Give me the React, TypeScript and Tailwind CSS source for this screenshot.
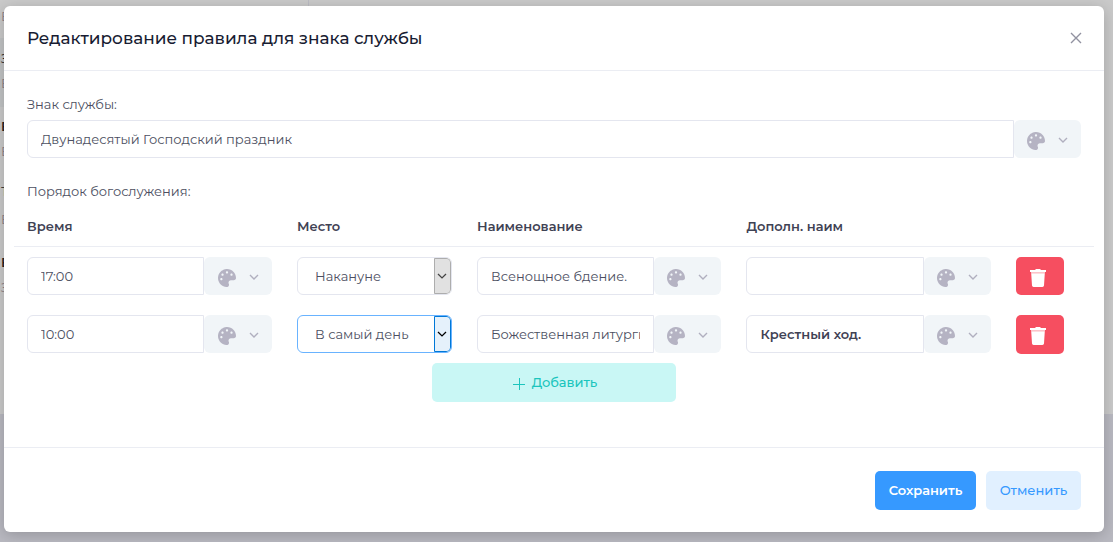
import type { ReactNode } from "react";

function Txt({ className, children }: { className: string; children: ReactNode }) {
  return <span className={`block whitespace-nowrap ${className}`}>{children}</span>;
}

function Palette() {
  return (
    <svg viewBox="0 0 512 512" className="mt-[3px] size-[18px] shrink-0 fill-[#b5b3c3]">
      <path d="M204.3 5C104.900 24.400 24.800 104.300 5.200 203.400c-37 187 131.700 326.400 258.800 306.700 41.200-6.400 61.400-54.600 42.500-91.700-23.100-45.400 9.900-98.400 60.900-98.400h79.700c35.800 0 64.800-29.600 64.900-65.300C511.500 97.100 368.100-26.900 204.300 5zM96 320c-17.700 0-32-14.300-32-32s14.300-32 32-32 32 14.300 32 32-14.300 32-32 32zm32-128c-17.700 0-32-14.300-32-32s14.300-32 32-32 32 14.300 32 32-14.300 32-32 32zm128-64c-17.700 0-32-14.300-32-32s14.300-32 32-32 32 14.300 32 32-14.300 32-32 32zm128 64c-17.700 0-32-14.300-32-32s14.300-32 32-32 32 14.300 32 32-14.300 32-32 32z" />
    </svg>
  );
}

function Chevron({ className }: { className: string }) {
  return (
    <svg viewBox="0 0 10 6" className={`h-[6px] w-[10px] shrink-0 fill-none ${className}`}>
      <path d="M1 1 5 4.900 9 1" />
    </svg>
  );
}

function StyledInput({ children, className = "", wide = false }: { children?: ReactNode; className?: string; wide?: boolean }) {
  return (
    <div className={`flex h-[38px] ${className}`}>
      <div className="flex min-w-0 flex-1 items-center rounded-l-md border border-[#e4e6ef] px-[13px]">
        <div className="-mt-px min-w-0 flex-1 overflow-hidden">{children}</div>
      </div>
      <button className={`flex items-center rounded-md bg-[#f1f5f8] ${wide ? "w-[68px] pl-[14px]" : "w-[67px] pl-[13px]"}`}>
        <Palette />
        <Chevron className="mt-px ml-[13px] stroke-[#b0afbf] stroke-[1.4]" />
      </button>
    </div>
  );
}

function Select({ children, active = false }: { children: ReactNode; active?: boolean }) {
  return (
    <div className={`flex h-[38px] w-[155px] items-center overflow-hidden rounded-md border pl-[17px] ${active ? "border-[#69b3ff]" : "border-[#e4e6ef]"}`}>
      <div className="-mt-px flex-1">{children}</div>
      <div className={`flex h-9 w-[17px] items-center rounded-r-[4px] border pl-[2px] ${active ? "border-[#0078d7] bg-[#e5f1fb]" : "border-[#adadad] bg-[#e1e1e1]"}`}>
        <Chevron className={active ? "stroke-black stroke-[1.3]" : "stroke-[#444] stroke-[1.3]"} />
      </div>
    </div>
  );
}

function DeleteButton({ className }: { className: string }) {
  return (
    <button className={`flex w-12 justify-center rounded-[5px] bg-[#f64e60] pt-3 pr-1 ${className}`}>
      <svg viewBox="0 0 16 18" className="h-[18px] w-4 fill-white">
        <path d="M5.500 0h5v1H16v2H0V1h5.500z" />
        <path d="M1 3h14v1.300H1z" className="fill-[#fcc3c9]" />
        <path d="M1.200 4.300h13.600L14 16.500a1.600 1.600 0 0 1-1.600 1.500H3.600A1.600 1.600 0 0 1 2 16.500z" />
      </svg>
    </button>
  );
}

const body = "text-[13px] leading-4 text-[#4c4f61]";
const head = "text-[13px] leading-4 font-semibold text-[#3f4254]";

export default function App() {
  return (
    <div className="relative h-[542px] w-[1113px] overflow-hidden bg-linear-to-b from-[#cacaca] from-[414px] to-[#b9b9c1] to-[414px] font-['Montserrat','Inter','Liberation_Sans',sans-serif]">
      <div className="absolute top-0 left-[308px] h-1.5 w-px bg-[#bcbcc4]" />
      <div className="absolute top-[38px] left-0 h-[69px] w-1 bg-[#c2c4c5]" />
      <div className="absolute top-0 left-px w-4 text-[13px] text-[#8a7f86]">
        <div className="absolute top-[7px]">В</div>
        <div className="absolute top-[49px] text-[#222]">З</div>
        <div className="absolute top-[74px]">В</div>
        <div className="absolute top-[117px] font-semibold text-[#222]">В</div>
        <div className="absolute top-[142px]">В</div>
        <div className="absolute top-[182px] text-[#222]">Т</div>
        <div className="absolute top-[210px]">В</div>
        <div className="absolute top-[253px] font-semibold text-[#222]">В</div>
        <div className="absolute top-[278px]">З</div>
      </div>
      <div className="relative mt-1.5 ml-1 flex h-[526px] w-[1100px] flex-col rounded-md bg-white shadow-[0_3px_15px_rgba(0,0,0,0.2)]">
        <header className="flex h-[65px] items-center justify-between border-b border-[#ebedf3] pr-[22px] pl-[23px]">
          <Txt className="text-[16.9px] leading-6 font-medium text-[#181c32]">Редактирование правила для знака службы</Txt>
          <svg viewBox="0 0 12 12" className="size-3 fill-none stroke-[#9192a0] stroke-[1.4]"><path d="m1 1 10 10M11 1 1 11" /></svg>
        </header>
        <main className="flex h-[376px] flex-col px-[10px]">
          <Txt className={`mt-[25px] ml-[13px] ${body}`}>Знак службы:</Txt>
          <StyledInput className="mx-[13px] mt-2"><Txt className={body}>Двунадесятый Господский праздник</Txt></StyledInput>
          <Txt className={`mt-[25px] ml-[13px] ${body}`}>Порядок богослужения:</Txt>
          <div className="mt-[11px] grid h-[37px] grid-cols-[270px_180px_269.500px_270px] border-b border-[#ebedf3] pt-2 pl-[13px]">
            <Txt className={head}>Время</Txt>
            <Txt className={head}>Место</Txt>
            <Txt className={head}>Наименование</Txt>
            <Txt className={head}>Дополн. наим</Txt>
          </div>
          <div className="mt-[10px] grid grid-cols-[245px_155px_244px_245px_48px] gap-x-[25px] gap-y-5 pl-[13px]">
            <StyledInput wide><Txt className={body}>17:00</Txt></StyledInput>
            <Select><Txt className={body}>Накануне</Txt></Select>
            <StyledInput><Txt className={body}>Всенощное бдение.</Txt></StyledInput>
            <StyledInput />
            <DeleteButton className="h-[38px]" />
            <StyledInput wide><Txt className={body}>10:00</Txt></StyledInput>
            <Select active><Txt className={body}>В самый день</Txt></Select>
            <StyledInput><Txt className={`-tracking-[0.02px] ${body}`}>Божественная литургия</Txt></StyledInput>
            <StyledInput><Txt className={`ml-[0.5px] ${head}`}>Крестный ход.</Txt></StyledInput>
            <DeleteButton className="h-[39px]" />
          </div>
          <button className="mt-[9px] ml-[418px] flex h-[39px] w-[244px] items-center justify-center rounded-[5px] bg-[#c9f7f5] pl-[2px] text-[#1bc5bd]">
            <svg viewBox="0 0 12 12" className="mt-[3px] mr-[7px] size-3 fill-none stroke-[#1bc5bd]"><path d="M6.500 0v12M0 6.500h12" /></svg>
            <Txt className="-mt-px text-[13px] leading-4 font-medium">Добавить</Txt>
          </button>
        </main>
        <footer className="flex flex-1 justify-end gap-[10px] border-t border-[#ebedf3] pt-[23px] pr-[23px]">
          <button className="flex h-[39px] w-[101px] items-center justify-center rounded-[5px] bg-[#3699ff] text-white"><Txt className="-mt-0.5 text-[13px] leading-4 font-semibold">Сохранить</Txt></button>
          <button className="flex h-[39px] w-[95px] items-center justify-center rounded-[5px] bg-[#e1f0ff] text-[#3699ff]"><Txt className="-mt-0.5 text-[13px] leading-4 font-medium">Отменить</Txt></button>
        </footer>
      </div>
    </div>
  );
}
